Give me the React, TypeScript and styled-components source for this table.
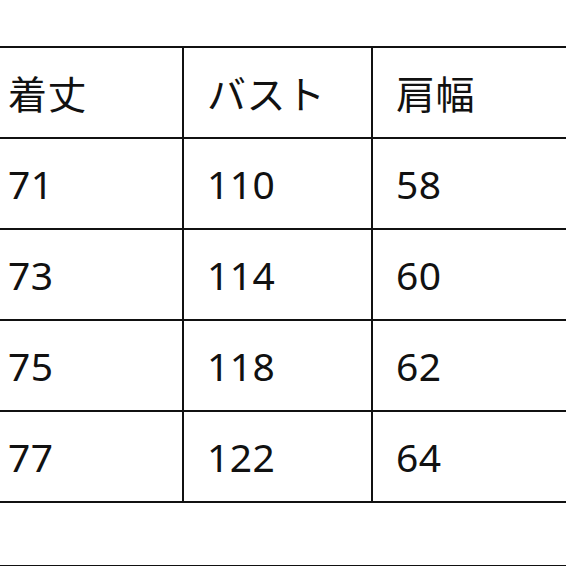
import styled, { createGlobalStyle } from 'styled-components';

const GlobalStyle = createGlobalStyle`
    html, body {
        margin: 0;
        padding: 0;
        background: #ffffff;
        overflow: hidden;
    }
    body {
        font-family: "Noto Sans", "Noto Sans CJK JP", sans-serif;
        color: #111111;
    }
`;

const Page = styled.div`
    width: 566px;
    height: 566px;
    padding-top: 46px;
    box-sizing: border-box;
    overflow: hidden;
`;

const SizeTable = styled.table`
    border-collapse: collapse;
    table-layout: fixed;
    width: 588px;
    margin-left: -17px;
`;

const Col = styled.col<{ $width: number }>`
    width: ${(p) => p.$width}px;
`;

const Cell = styled.td`
    border: 2px solid #111111;
    height: 89px;
    padding: 0 0 0 23px;
    font-size: 39px;
    line-height: 1;
    font-weight: 400;
    text-align: left;
    vertical-align: middle;
    letter-spacing: 0.5px;
`;

const HeadCell = styled(Cell).attrs({ as: 'th' })`
    font-family: "Noto Sans CJK JP", sans-serif;
    font-weight: 400;
`;

const Divider = styled.div`
    height: 2px;
    background: #111111;
    margin-top: 62px;
`;

const rows = [
    ['71', '110', '58'],
    ['73', '114', '60'],
    ['75', '118', '62'],
    ['77', '122', '64'],
];

export default function App() {
    return (
        <>
            <GlobalStyle />
            <Page>
                <SizeTable>
                    <colgroup>
                        <Col $width={199} />
                        <Col $width={189} />
                        <Col $width={200} />
                    </colgroup>
                    <thead>
                        <tr>
                            <HeadCell>着丈</HeadCell>
                            <HeadCell>バスト</HeadCell>
                            <HeadCell>肩幅</HeadCell>
                        </tr>
                    </thead>
                    <tbody>
                        {rows.map((r) => (
                            <tr key={r[0]}>
                                {r.map((v, i) => (
                                    <Cell key={i}>{v}</Cell>
                                ))}
                            </tr>
                        ))}
                    </tbody>
                </SizeTable>
                <Divider />
            </Page>
        </>
    );
}
